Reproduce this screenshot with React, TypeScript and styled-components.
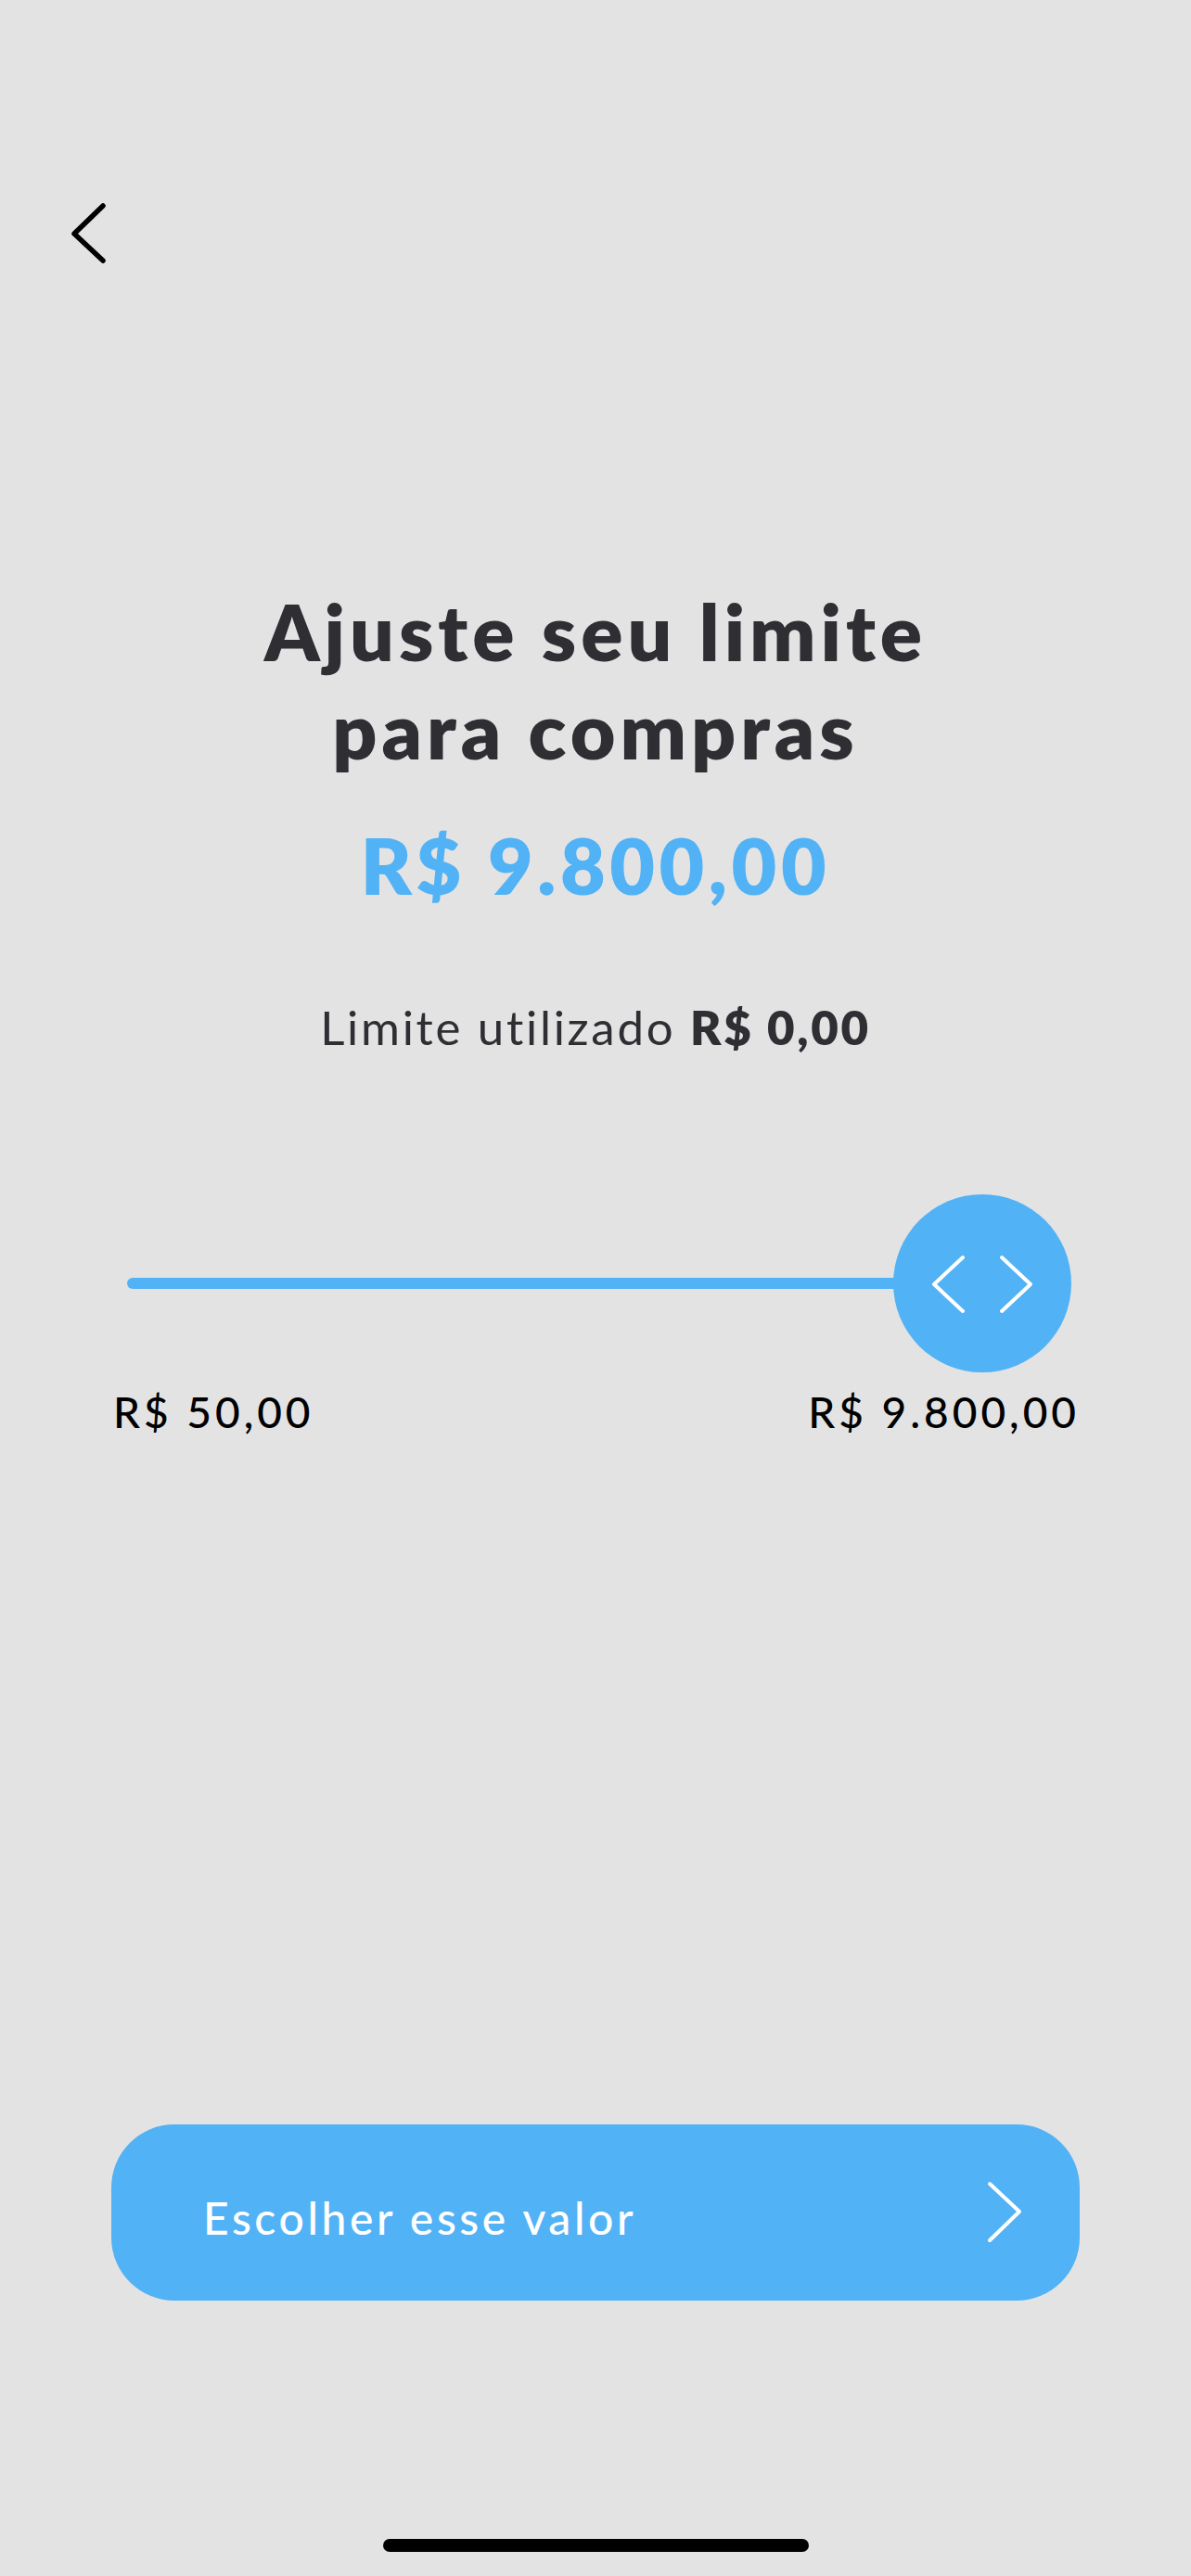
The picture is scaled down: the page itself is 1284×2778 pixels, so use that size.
import React from "react";
import styled, { createGlobalStyle } from "styled-components";

const GlobalStyle = createGlobalStyle`
  html, body { margin: 0; padding: 0; background: #e3e3e3; }
  * { box-sizing: border-box; }
`;

const BLUE = "#52b2f6";

const Page = styled.div`
  width: 1284px;
  height: 2778px;
  background: #e3e3e3;
  display: flex;
  flex-direction: column;
  font-family: Lato, "Open Sans", sans-serif;
  overflow: hidden;
`;

const Header = styled.header`
  padding: 214px 0 0 72px;
  height: 290px;
`;

const BackButton = styled.button`
  border: 0;
  padding: 0;
  background: transparent;
  width: 48px;
  height: 76px;
  display: block;
  cursor: pointer;
`;

const Title = styled.h1`
  margin: 338px 0 0;
  font-size: 84px;
  line-height: 106px;
  font-weight: 800;
  letter-spacing: 5px;
  color: #2e2e33;
  text-align: center;
`;

const Amount = styled.div`
  margin-top: 43px;
  font-size: 84px;
  line-height: 100px;
  font-weight: 800;
  letter-spacing: 4.6px;
  color: ${BLUE};
  text-align: center;
`;

const Used = styled.p`
  margin: 95px 0 0;
  font-size: 51px;
  line-height: 60px;
  font-weight: 400;
  letter-spacing: 2.7px;
  color: #2e2e33;
  text-align: center;
  strong { font-weight: 800; }
`;

const SliderArea = styled.div`
  position: relative;
  margin: 150px 120px 0;
  height: 192px;
`;

const Track = styled.div`
  position: absolute;
  left: 17px;
  top: 90px;
  height: 12px;
  border-radius: 6px;
  background: ${BLUE};
`;

const Thumb = styled.div`
  position: absolute;
  top: 0;
  width: 192px;
  height: 192px;
  border-radius: 50%;
  background: ${BLUE};
  display: flex;
  align-items: center;
  justify-content: center;
`;

const RangeLabels = styled.div`
  margin: 16px 120px 0 122px;
  display: flex;
  justify-content: space-between;
  font-size: 46px;
  line-height: 54px;
  font-weight: 500;
  letter-spacing: 4px;
  color: #000;
`;

const CTA = styled.button`
  margin: 741px 120px 0;
  height: 190px;
  border: 0;
  border-radius: 68px;
  background: ${BLUE};
  color: #fff;
  display: flex;
  align-items: center;
  justify-content: space-between;
  padding: 0 61px 0 99px;
  font-family: Lato, "Open Sans", sans-serif;
  font-size: 48px;
  font-weight: 500;
  letter-spacing: 3.6px;
  cursor: pointer;
`;

const CTALabel = styled.span`
  padding-top: 10px;
`;

const HomeIndicator = styled.div`
  margin: 257px auto 0;
  width: 459px;
  height: 14px;
  border-radius: 7px;
  background: #000;
`;

const min = 50;
const max = 9800;
const value = 9800;

export default function App() {
  const trackLen = 922;
  const pct = (value - min) / (max - min);
  const fill = trackLen * pct;
  return (
    <>
      <GlobalStyle />
      <Page>
        <Header>
          <BackButton aria-label="Voltar">
            <svg width="48" height="76" viewBox="0 0 48 76" fill="none">
              <path d="M39 8 L8 38 L39 67" stroke="#000" strokeWidth="5.5" strokeLinecap="round" strokeLinejoin="round" />
            </svg>
          </BackButton>
        </Header>
        <Title>
          Ajuste seu limite
          <br />
          para compras
        </Title>
        <Amount>R$ 9.800,00</Amount>
        <Used>
          Limite utilizado <strong>R$ 0,00</strong>
        </Used>
        <SliderArea>
          <Track style={{ width: fill }} />
          <Thumb style={{ left: 17 + fill - 96 }}>
            <svg width="192" height="192" viewBox="0 0 192 192" fill="none">
              <path d="M75 68 L44 97 L75 126" stroke="#fff" strokeWidth="4" strokeLinecap="round" strokeLinejoin="round" />
              <path d="M117 68 L148 97 L117 126" stroke="#fff" strokeWidth="4" strokeLinecap="round" strokeLinejoin="round" />
            </svg>
          </Thumb>
        </SliderArea>
        <RangeLabels>
          <span>R$ 50,00</span>
          <span>R$ 9.800,00</span>
        </RangeLabels>
        <CTA>
          <CTALabel>Escolher esse valor</CTALabel>
          <svg width="40" height="70" viewBox="0 0 40 70" fill="none">
            <path d="M4 4 L36 34 L4 65" stroke="#fff" strokeWidth="4" strokeLinecap="round" strokeLinejoin="round" />
          </svg>
        </CTA>
        <HomeIndicator />
      </Page>
    </>
  );
}
